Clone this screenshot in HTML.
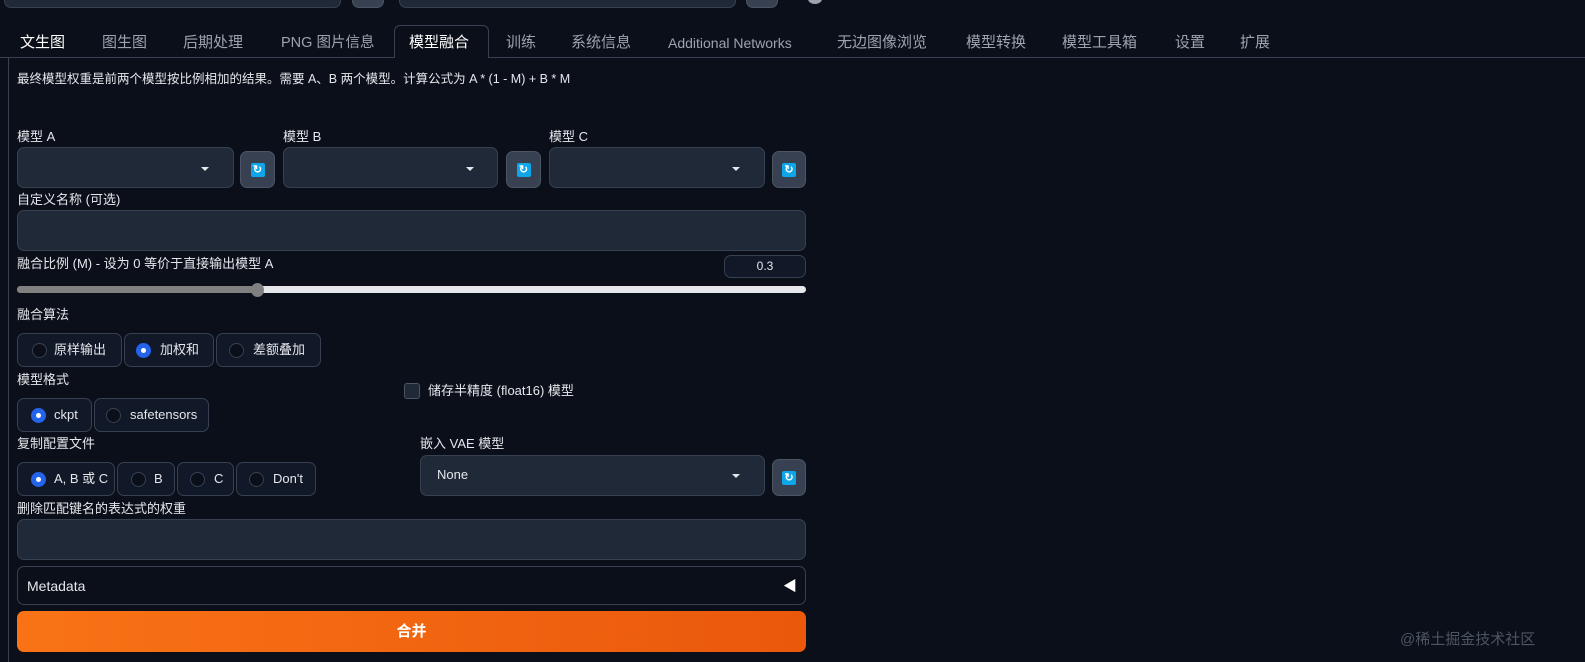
<!DOCTYPE html>
<html><head><meta charset="utf-8"><style>
*{box-sizing:border-box;margin:0;padding:0}
body{width:1585px;height:662px;background:#0b0f19;color:#e5e7eb;font-family:"Liberation Sans","Noto Sans CJK SC",sans-serif;font-size:13px;position:relative;overflow:hidden}
.a{position:absolute}
.box{position:absolute;background:#1f2937;border:1px solid #374151;border-radius:7px}
.btn{position:absolute;background:#374151;border:1px solid #4b5563;border-radius:7px}
.ico{position:absolute;left:50%;top:50%;width:14px;height:14px;margin:-7px 0 0 -7px;background:#0ea5e9;border-radius:2px;color:#fff;font-size:11px;line-height:14px;text-align:center;font-weight:bold}
.caret{position:absolute;width:0;height:0;border-left:4px solid transparent;border-right:4px solid transparent;border-top:4px solid #e5e7eb}
.tab{position:absolute;top:33px;height:20px;line-height:20px;font-size:15px;color:#9ca3af;white-space:nowrap}
.lbl{position:absolute;font-size:13px;color:#e5e7eb;line-height:16px;white-space:nowrap}
.radio{position:absolute;background:#111827;border:1px solid #374151;border-radius:7px;height:34px;font-size:13px;color:#e5e7eb;line-height:32px}
.dot{position:absolute;top:9px;width:15px;height:15px;border-radius:50%;border:1px solid #374151;background:#0b0f19}
.dot.on{background:#2563eb;border-color:#2563eb}
.dot.on:after{content:"";position:absolute;left:4px;top:4px;width:5px;height:5px;background:#fff;border-radius:50%}
</style></head><body>
<div class="box" style="left:4px;top:-20px;width:337px;height:28px;background:#1f2937"></div>
<div class="btn" style="left:352px;top:-20px;width:32px;height:28px"></div>
<div class="box" style="left:399px;top:-20px;width:337px;height:28px"></div>
<div class="btn" style="left:746px;top:-20px;width:32px;height:28px"></div>
<div class="a" style="left:808px;top:-6px;width:14px;height:10px;border-radius:50%;background:#9ca3af"></div>

<div class="a" style="left:394px;top:25px;width:95px;height:33px;border:1px solid #374151;border-bottom:none;border-radius:6px 6px 0 0;background:#0b0f19;z-index:2"></div>
<div class="a" style="left:0;top:57px;width:1585px;height:1px;background:#374151"></div>
<div class="a" style="left:8px;top:57px;width:1px;height:605px;background:#374151"></div>
<div class="tab" style="left:20px;color:#fff">文生图</div>
<div class="tab" style="left:102px">图生图</div>
<div class="tab" style="left:183px">后期处理</div>
<div class="tab" style="left:281px;font-size:14.5px">PNG 图片信息</div>
<div class="tab" style="left:409px;color:#fff;z-index:3">模型融合</div>
<div class="tab" style="left:506px">训练</div>
<div class="tab" style="left:571px">系统信息</div>
<div class="tab" style="left:668px;font-size:14px">Additional Networks</div>
<div class="tab" style="left:837px">无边图像浏览</div>
<div class="tab" style="left:966px">模型转换</div>
<div class="tab" style="left:1062px">模型工具箱</div>
<div class="tab" style="left:1175px">设置</div>
<div class="tab" style="left:1240px">扩展</div>

<div class="lbl" style="left:17px;top:71px;font-size:12.5px">最终模型权重是前两个模型按比例相加的结果。需要 A、B 两个模型。计算公式为 A * (1 - M) + B * M</div>

<div class="lbl" style="left:17px;top:129px">模型 A</div>
<div class="lbl" style="left:283px;top:129px">模型 B</div>
<div class="lbl" style="left:549px;top:129px">模型 C</div>
<div class="box" style="left:17px;top:147px;width:217px;height:41px"><div class="caret" style="left:183px;top:19px"></div></div>
<div class="btn" style="left:240px;top:151px;width:35px;height:37px"><div class="ico">↻</div></div>
<div class="box" style="left:283px;top:147px;width:215px;height:41px"><div class="caret" style="left:182px;top:19px"></div></div>
<div class="btn" style="left:506px;top:151px;width:35px;height:37px"><div class="ico">↻</div></div>
<div class="box" style="left:549px;top:147px;width:216px;height:41px"><div class="caret" style="left:182px;top:19px"></div></div>
<div class="btn" style="left:772px;top:151px;width:34px;height:37px"><div class="ico">↻</div></div>

<div class="lbl" style="left:17px;top:192px">自定义名称 (可选)</div>
<div class="box" style="left:17px;top:210px;width:789px;height:41px"></div>

<div class="lbl" style="left:17px;top:256px">融合比例 (M) - 设为 0 等价于直接输出模型 A</div>
<div class="box" style="left:724px;top:255px;width:82px;height:23px;background:#111827;text-align:center;line-height:21px;font-size:12px">0.3</div>
<div class="a" style="left:17px;top:286px;width:789px;height:7px;border-radius:4px;background:#e5e7eb"></div>
<div class="a" style="left:17px;top:286px;width:241px;height:7px;border-radius:4px;background:#808080"></div>
<div class="a" style="left:251px;top:283px;width:13px;height:14px;border-radius:50%;background:#808080"></div>

<div class="lbl" style="left:17px;top:307px">融合算法</div>
<div class="radio" style="left:17px;top:333px;width:105px"><div class="dot" style="left:14px"></div><span class="a" style="left:36px">原样输出</span></div>
<div class="radio" style="left:124px;top:333px;width:90px"><div class="dot on" style="left:11px"></div><span class="a" style="left:35px">加权和</span></div>
<div class="radio" style="left:216px;top:333px;width:105px"><div class="dot" style="left:12px"></div><span class="a" style="left:36px">差额叠加</span></div>

<div class="lbl" style="left:17px;top:372px">模型格式</div>
<div class="radio" style="left:17px;top:398px;width:75px"><div class="dot on" style="left:13px"></div><span class="a" style="left:36px">ckpt</span></div>
<div class="radio" style="left:94px;top:398px;width:115px"><div class="dot" style="left:11px"></div><span class="a" style="left:35px">safetensors</span></div>

<div class="a" style="left:404px;top:383px;width:16px;height:16px;border:1px solid #4b5563;border-radius:3px;background:#1f2937"></div>
<div class="lbl" style="left:428px;top:383px">储存半精度 (float16) 模型</div>

<div class="lbl" style="left:17px;top:436px">复制配置文件</div>
<div class="radio" style="left:17px;top:462px;width:98px"><div class="dot on" style="left:13px"></div><span class="a" style="left:36px">A, B 或 C</span></div>
<div class="radio" style="left:117px;top:462px;width:58px"><div class="dot" style="left:13px"></div><span class="a" style="left:36px">B</span></div>
<div class="radio" style="left:177px;top:462px;width:57px"><div class="dot" style="left:12px"></div><span class="a" style="left:36px">C</span></div>
<div class="radio" style="left:236px;top:462px;width:80px"><div class="dot" style="left:12px"></div><span class="a" style="left:36px">Don't</span></div>

<div class="lbl" style="left:420px;top:436px">嵌入 VAE 模型</div>
<div class="box" style="left:420px;top:455px;width:345px;height:41px"><span class="a" style="left:16px;top:11px">None</span><div class="caret" style="left:311px;top:18px"></div></div>
<div class="btn" style="left:772px;top:459px;width:34px;height:37px"><div class="ico">↻</div></div>

<div class="lbl" style="left:17px;top:501px">删除匹配键名的表达式的权重</div>
<div class="box" style="left:17px;top:519px;width:789px;height:41px"></div>

<div class="a" style="left:17px;top:566px;width:789px;height:39px;border:1px solid #374151;border-radius:7px;background:#0b0f19"><span class="a" style="left:9px;top:11px;font-size:14px">Metadata</span><span class="a" style="left:765px;top:9px;font-size:14px;color:#fff">◀</span></div>

<div class="a" style="left:17px;top:611px;width:789px;height:41px;border-radius:7px;background:linear-gradient(90deg,#f97316,#ea580c);color:#fff;font-size:15px;font-weight:bold;text-align:center;line-height:41px">合并</div>

<div class="a" style="left:1400px;top:628px;font-size:15px;color:#4b5563">@稀土掘金技术社区</div>
</body></html>
